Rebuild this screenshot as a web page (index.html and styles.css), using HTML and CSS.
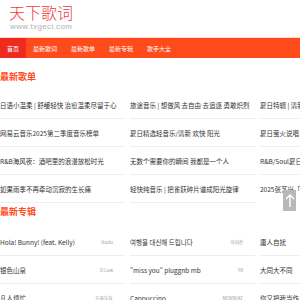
FILE: index.html
```html
<!DOCTYPE html>
<html lang="zh-CN">
<head>
<meta charset="utf-8">
<title>天下歌词</title>
<link rel="stylesheet" href="styles.css">
</head>
<body>
<header class="header">
  <div class="logo">
    <div class="logo-name">天下歌词</div>
    <div class="logo-url">www.txgeci.com</div>
  </div>
</header>
<nav class="nav">
  <a class="nav-item active">首页</a>
  <a class="nav-item">最新歌词</a>
  <a class="nav-item">最新歌单</a>
  <a class="nav-item">最新专辑</a>
  <a class="nav-item">歌手大全</a>
</nav>
<main class="main">
  <h2 class="section-title first">最新歌单</h2>
  <div class="grid">
    <div class="col">
      <div class="cell">日语小温柔 | 舒缓轻快 治愈温柔尽留于心</div>
      <div class="cell">网易云音乐2025第二季度音乐榜单</div>
      <div class="cell">R&amp;B海风夜：酒吧里的浪漫放松时光</div>
      <div class="cell">如果雨季不再牵动沉寂的生长痛</div>
    </div>
    <div class="col">
      <div class="cell">旅途音乐 | 想做风 去自由 去追逐 勇敢炽烈</div>
      <div class="cell">夏日精选轻音乐/清新 欢快 阳光</div>
      <div class="cell">无数个需要你的瞬间 我都是一个人</div>
      <div class="cell">轻快纯音乐 | 把雀跃碎片谱成阳光旋律</div>
    </div>
    <div class="col">
      <div class="cell">夏日特辑 | 清新</div>
      <div class="cell">夏日萤火说唱</div>
      <div class="cell">R&amp;B/Soul夏日</div>
      <div class="cell last">2025张艺兴「</div>
    </div>
  </div>
  <h2 class="section-title">最新专辑</h2>
  <div class="grid">
    <div class="col">
      <div class="cell album"><span class="album-name">Hola! Bunny! (feat. Kelly)</span><span class="artist">Itsolu</span></div>
      <div class="cell album"><span class="album-name">银色山泉</span><span class="artist">D.Low</span></div>
      <div class="cell album"><span class="album-name">凡人烦忙</span><span class="artist">方面乐队</span></div>
    </div>
    <div class="col">
      <div class="cell album"><span class="album-name">여행을 대신해 드립니다</span><span class="artist">아이런</span></div>
      <div class="cell album"><span class="album-name">"miss you" pluggnb mb</span><span class="artist">YR</span></div>
      <div class="cell album"><span class="album-name">Cappuccino</span><span class="artist">NEWBEAT</span></div>
    </div>
    <div class="col">
      <div class="cell album"><span class="album-name">庸人自扰</span></div>
      <div class="cell album"><span class="album-name">大同大不同</span></div>
      <div class="cell album"><span class="album-name">你又把我当作</span></div>
    </div>
  </div>
</main>
<a class="back-top" aria-label="返回顶部">
  <svg width="10" height="14" viewBox="0 0 10 14"><path d="M5 1 L5 13 M1 5 L5 1 L9 5" fill="none" stroke="#fff" stroke-width="1.4"/></svg>
</a>
</body>
</html>
```
FILE: styles.css
```css
html {
  overflow: hidden;
}
body {
  margin: 0;
  background: #fff;
  font-family: "Noto Sans CJK SC", "Liberation Sans", sans-serif;
  color: #333;
}
.header {
  height: 37px;
}
.logo {
  padding: 3px 0 0 9px;
}
.logo-name {
  font-size: 16px;
  line-height: 19px;
  font-weight: 300;
  color: #ef3a3f;
}
.logo-url {
  font-family: "Liberation Sans", sans-serif;
  font-size: 8px;
  line-height: 10px;
  color: #b0b0b0;
  letter-spacing: 0.35px;
  padding-left: 1px;
}
.nav {
  display: flex;
  height: 20px;
  background: #ff4b1c;
  border-top: 1px solid #ffd6cc;
}
.nav-item {
  display: flex;
  align-items: center;
  padding: 0 7px;
  font-size: 6px;
  color: #fff;
  text-decoration: none;
}
.nav-item.active {
  background: #ef2b1f;
}
.main {
  width: 400px;
}
.section-title {
  margin: 0 0 10px;
  padding-top: 3px;
  font-size: 9px;
  line-height: 12px;
  font-weight: 700;
  color: #ff4b1c;
}
.section-title.first {
  padding-top: 13px;
  margin-bottom: 8px;
}
.grid {
  display: grid;
  grid-template-columns: 125px 125px 125px;
  column-gap: 5px;
}
.cell {
  height: 27px;
  border-bottom: 1px solid #eeeeee;
  display: flex;
  align-items: center;
  font-size: 6.5px;
  color: #333;
  white-space: nowrap;
  overflow: hidden;
}
.cell.last {
  border-bottom-color: transparent;
}
.album {
  justify-content: space-between;
}
.album-name {
  overflow: hidden;
}
.artist {
  font-size: 4.5px;
  color: #999;
  padding-right: 12px;
}
.back-top {
  position: fixed;
  left: 283px;
  top: 190px;
  width: 13px;
  height: 21px;
  background: #b8b8b8;
  display: flex;
  align-items: center;
  justify-content: center;
}
```
